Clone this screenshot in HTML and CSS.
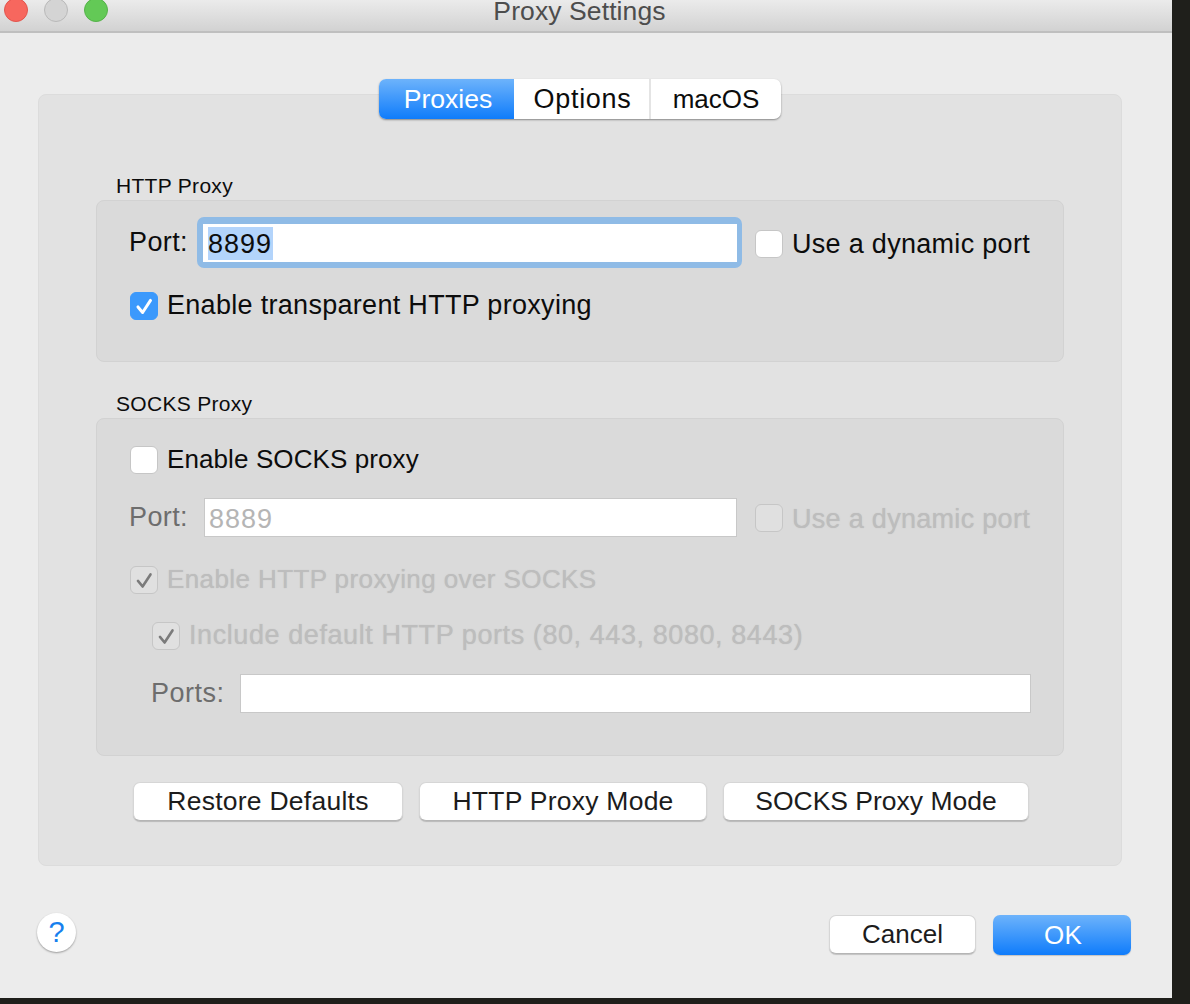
FILE: index.html
```html
<!DOCTYPE html>
<html lang="en">
<head>
<meta charset="utf-8">
<title>Proxy Settings</title>
<link rel="stylesheet" href="styles.css">
</head>
<body>
<div class="window">
  <header class="titlebar">
    <div class="lights">
      <span class="light red"></span>
      <span class="light gray"></span>
      <span class="light green"></span>
    </div>
    <div class="title">Proxy Settings</div>
  </header>
  <main class="content">
    <section class="panel">
      <nav class="tabs">
        <span class="tab tab-active">Proxies</span>
        <span class="tab tab-options">Options</span>
        <span class="tab tab-macos">macOS</span>
      </nav>
      <h2 class="group-label label-http">HTTP Proxy</h2>
      <div class="group group-http">
        <div class="row row-port">
          <span class="field-label">Port:</span>
          <span class="focus-ring"><span class="input input-focused"><span class="selection">8899</span></span></span>
          <span class="check check-right"></span>
          <span class="check-text text-dynamic">Use a dynamic port</span>
        </div>
        <div class="row row-transparent">
          <span class="check check-on"><svg viewBox="0 0 28 28"><path d="M7.5 15 L12.5 21 L21 8" fill="none" stroke="#fff" stroke-width="3.2" stroke-linecap="round" stroke-linejoin="round"/></svg></span>
          <span class="check-text text-transparent">Enable transparent HTTP proxying</span>
        </div>
      </div>
      <h2 class="group-label label-socks">SOCKS Proxy</h2>
      <div class="group group-socks">
        <div class="row row-socks">
          <span class="check"></span>
          <span class="check-text text-socks">Enable SOCKS proxy</span>
        </div>
        <div class="row row-sport">
          <span class="field-label disabled-label">Port:</span>
          <span class="input input-disabled">8889</span>
          <span class="check check-right check-off"></span>
          <span class="check-text text-dynamic disabled-text">Use a dynamic port</span>
        </div>
        <div class="row row-over">
          <span class="check check-off"><svg viewBox="0 0 28 28"><path d="M7.5 15 L12.5 21 L21 8" fill="none" stroke="#7b7b7b" stroke-width="2.8" stroke-linecap="round" stroke-linejoin="round"/></svg></span>
          <span class="check-text text-over disabled-text">Enable HTTP proxying over SOCKS</span>
        </div>
        <div class="row row-include">
          <span class="check check-off"><svg viewBox="0 0 28 28"><path d="M7.5 15 L12.5 21 L21 8" fill="none" stroke="#7b7b7b" stroke-width="2.8" stroke-linecap="round" stroke-linejoin="round"/></svg></span>
          <span class="check-text text-include disabled-text">Include default HTTP ports (80, 443, 8080, 8443)</span>
        </div>
        <div class="row row-ports">
          <span class="field-label disabled-label">Ports:</span>
          <span class="input input-ports"></span>
        </div>
      </div>
      <div class="panel-actions">
        <button class="btn btn-restore">Restore Defaults</button>
        <button class="btn btn-http">HTTP Proxy Mode</button>
        <button class="btn btn-socks">SOCKS Proxy Mode</button>
      </div>
    </section>
    <footer class="footer">
      <span class="help">?</span>
      <button class="btn btn-cancel">Cancel</button>
      <button class="btn btn-ok">OK</button>
    </footer>
  </main>
</div>
</body>
</html>
```
FILE: styles.css
```css
* { box-sizing: border-box; }
html, body { margin: 0; height: 100%; }
body {
  width: 1190px;
  height: 1004px;
  overflow: hidden;
  background: #1f1f1b;
  font-family: "Liberation Sans", Arial, sans-serif;
  font-size: 26px;
  color: #0c0c0c;
}
.window {
  width: 1172px;
  height: 998px;
  background: #ececec;
  display: flex;
  flex-direction: column;
}
.titlebar {
  height: 33px;
  flex: none;
  display: flex;
  align-items: flex-start;
  background: linear-gradient(#ebebeb, #d2d2d2);
  border-bottom: 2px solid #bfbfbf;
  position: relative;
}
.lights { display: flex; gap: 16px; margin: -2px 0 0 4px; }
.light { width: 24px; height: 24px; border-radius: 50%; border: 1px solid transparent; }
.red { background: #f7675e; border-color: #e2554d; }
.gray { background: #d4d4d4; border-color: #b9b9b9; }
.green { background: #63c956; border-color: #55b24a; }
.title {
  position: absolute;
  left: 0;
  right: 13px;
  top: -1px;
  text-align: center;
  font-size: 26.5px;
  line-height: 24px;
  letter-spacing: .1px;
  color: #4d4d4d;
}
.content { flex: 1; padding: 61px 50px 0 38px; display: flex; flex-direction: column; }
.panel {
  height: 772px;
  background: #e2e2e2;
  border: 1px solid #dcdcdc;
  border-radius: 8px;
  padding: 0 57px;
  display: flex;
  flex-direction: column;
}
.tabs {
  align-self: center;
  margin-top: -16px;
  height: 40px;
  display: flex;
  background: #fff;
  border-radius: 7px;
  box-shadow: 0 1px 2px rgba(0,0,0,.4);
}
.tab { display: flex; align-items: center; justify-content: center; height: 40px; }
.tab-active {
  width: 135px;
  padding-left: 3px;
  font-size: 26.6px;
  color: #fff;
  background: linear-gradient(#6db3fb, #0f7cfb);
  border-radius: 7px 0 0 7px;
}
.tab-options { width: 137px; padding-left: 2px; font-size: 27px; letter-spacing: .7px; border-right: 2px solid #e4e4e4; }
.tab-macos { width: 130px; }
.group-label { margin: 0; font-size: 21px; font-weight: 400; line-height: 26px; letter-spacing: .3px; padding-left: 20px; }
.label-http { margin-top: 54px; }
.label-socks { margin-top: 29px; }
.group {
  margin-top: 1px;
  background: #dadada;
  border: 1px solid #d2d2d2;
  border-radius: 8px;
  display: flex;
  flex-direction: column;
}
.group-http { height: 162px; }
.group-socks { height: 338px; }
.row { display: flex; align-items: center; }
.check-text, .field-label, .tab, .btn { white-space: nowrap; }
.field-label { width: 60px; font-size: 27px; letter-spacing: .4px; }
.disabled-label { color: #6d6d6d; }
.disabled-text { color: #bdbdbd; text-shadow: 0 0 1px rgba(170,170,170,.6); }
.check {
  flex: none;
  width: 28px;
  height: 28px;
  background: #fff;
  border: 1px solid #c6c6c6;
  border-radius: 6px;
  display: block;
}
.check svg { display: block; width: 100%; height: 100%; }
.check-on { background: #3b99fc; border-color: #3b99fc; }
.check-off { background: #e0e0e0; border-color: #c6c6c6; }
.check-text { margin-left: 9px; }
.text-dynamic, .text-transparent { font-size: 27px; letter-spacing: .3px; }
.text-socks { letter-spacing: .1px; }
.text-over { letter-spacing: .4px; }
.text-include { font-size: 27px; letter-spacing: .58px; }
.check-right { margin-left: 18px; }
.input {
  display: flex;
  align-items: center;
  background: #fff;
  border: 1px solid #c8c8c8;
  height: 39px;
  padding-left: 4px;
  font-size: 27px;
  letter-spacing: 1px;
}
.focus-ring {
  width: 545px;
  height: 51px;
  flex: none;
  margin-left: 8px;
  padding: 7px 5px 6px 6px;
  background: #8fbbe6;
  border-radius: 7px;
}
.input-focused { height: 38px; border: 0; padding-left: 5px; }
.selection { background: #b3d4fb; line-height: 32px; padding: 1px 1px 0 0; color: #0c0c0c; }
.row-port { margin-top: 16px; padding-left: 32px; height: 51px; }
.row-port .check-right { margin-left: 13px; }
.row-port .check, .row-port .check-text { margin-top: 3px; }
.row-transparent { margin-top: 22px; padding-left: 33px; }
.row-socks { margin-top: 25px; padding-left: 33px; }
.row-sport { margin-top: 23px; padding-left: 32px; }
.row-sport .check-text { margin-top: 4px; }
.row-sport .check { margin-top: 1px; }
.input-disabled { width: 533px; flex: none; margin-left: 15px; padding-top: 3px; color: #b5b5b5; }
.row-over { margin-top: 27px; padding-left: 33px; }
.row-include { margin-top: 25px; padding-left: 55px; }
.row-ports { margin-top: 23px; padding-left: 54px; }
.row-ports .field-label { width: 73px; letter-spacing: .5px; }
.input-ports { width: 791px; flex: none; margin-left: 16px; }
.panel-actions { display: flex; gap: 16px; margin-top: 26px; padding-left: 37px; }
.btn {
  font: inherit;
  font-size: 26.5px;
  letter-spacing: .25px;
  color: #1c1c1c;
  height: 39px;
  padding: 0;
  background: #fff;
  border: 1px solid #d6d6d6;
  border-bottom-color: #b5b5b5;
  border-radius: 7px;
  box-shadow: 0 1px 1px rgba(0,0,0,.18);
}
.btn-restore { width: 270px; }
.btn-http { width: 288px; }
.btn-socks { width: 306px; letter-spacing: 0; }
.footer { display: flex; align-items: flex-start; margin-top: 49px; height: 40px; margin-right: -9px; }
.help {
  flex: none;
  width: 39px;
  height: 39px;
  border-radius: 50%;
  margin: -2px 0 0 -1px;
  background: #fff;
  color: #1680ee;
  font-size: 29px;
  display: flex;
  align-items: center;
  justify-content: center;
  box-shadow: 0 1px 2px rgba(0,0,0,.35);
}
.btn-cancel { width: 147px; height: 39px; margin-left: auto; font-size: 26px; letter-spacing: .05px; }
.btn-ok {
  width: 138px;
  height: 40px;
  margin-left: 17px;
  padding-left: 2px;
  font-size: 26px;
  color: #fff;
  border: 0;
  background: linear-gradient(#6db3fb, #0f7cfb);
}
```
